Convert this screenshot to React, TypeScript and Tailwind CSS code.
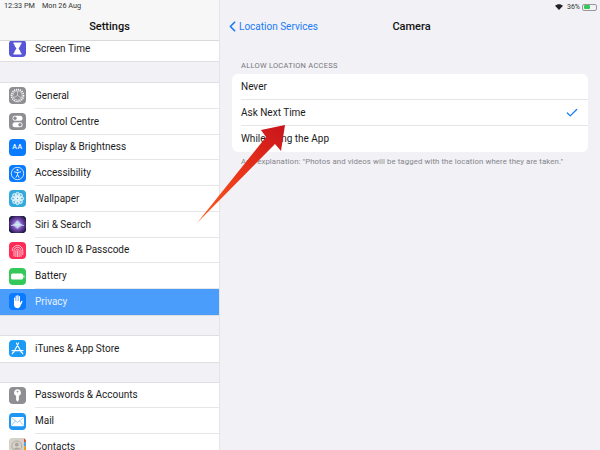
import type { ReactNode } from "react";
import { ChevronLeft, Check } from "lucide-react";

const Tile = ({ bg, children }: { bg: string; children: ReactNode }) => (
  <div className={`w-[17px] h-[17px] rounded-[4px] flex items-center justify-center shrink-0 overflow-hidden ${bg}`}>
    {children}
  </div>
);

const Gear = () => (
  <svg viewBox="0 0 17 17" className="w-[17px] h-[17px]">
    <circle cx="8.5" cy="8.5" r="6" fill="none" stroke="#fff" strokeWidth="1.6" strokeDasharray="1.2 0.8" />
    <circle cx="8.5" cy="8.5" r="4.6" fill="none" stroke="#eee" strokeWidth="0.7" />
    <path d="M8.5 8.5 L8.5 4 M8.5 8.5 L12.4 10.8 M8.5 8.5 L4.6 10.8" stroke="#eee" strokeWidth="0.6" />
  </svg>
);

const Toggles = () => (
  <svg viewBox="0 0 17 17" className="w-[17px] h-[17px]">
    <rect x="3.5" y="2.8" width="10" height="5" rx="2.5" fill="#fff" />
    <circle cx="6" cy="5.3" r="1.7" fill="#8e8e93" />
    <rect x="3.5" y="9.2" width="10" height="5" rx="2.5" fill="#fff" />
    <circle cx="11" cy="11.7" r="1.7" fill="#8e8e93" />
  </svg>
);

const Person = () => (
  <svg viewBox="0 0 17 17" className="w-[17px] h-[17px]" fill="none" stroke="#fff">
    <circle cx="8.5" cy="8.5" r="6.2" strokeWidth="0.8" />
    <circle cx="8.5" cy="5" r="1" fill="#fff" stroke="none" />
    <path d="M5 6.8 L8.5 7.6 L12 6.8 M8.5 7.6 V9.6 M8.5 9.6 L6.8 12.6 M8.5 9.6 L10.2 12.6" strokeWidth="0.9" />
  </svg>
);

const Flower = () => (
  <svg viewBox="0 0 17 17" className="w-[17px] h-[17px]" fill="none" stroke="#fff" strokeWidth="0.8">
    {[0, 45, 90, 135, 180, 225, 270, 315].map((a) => (
      <ellipse key={a} cx="8.5" cy="4.9" rx="1.9" ry="2.6" transform={`rotate(${a} 8.5 8.5)`} fill="#ffffff55" />
    ))}
  </svg>
);

const Siri = () => (
  <svg viewBox="0 0 17 17" className="w-[17px] h-[17px]">
    <defs>
      <radialGradient id="siriGlow" cx="0.5" cy="0.5" r="0.6">
        <stop offset="0" stopColor="#7fd8e8" />
        <stop offset="0.5" stopColor="#7d4bb8" />
        <stop offset="1" stopColor="#16163a" />
      </radialGradient>
    </defs>
    <rect width="17" height="17" fill="url(#siriGlow)" />
    <path d="M2.5 9 C5 9 6 6.5 8.5 4 C11 6.5 12 9 14.5 9 C12 9.6 10.5 11 8.5 13 C6.5 11 5 9.6 2.5 9Z" fill="#ffffff" fillOpacity="0.55" />
    <path d="M2 9.5 C6 8.5 11 8.5 15 9.5" stroke="#d9f3ff" strokeWidth="0.7" fill="none" />
  </svg>
);

const Finger = () => (
  <svg viewBox="0 0 17 17" className="w-[17px] h-[17px]" fill="none" stroke="#fff" strokeWidth="0.8" strokeOpacity="0.85">
    <path d="M3.2 9 C3.2 1.6 13.8 1.6 13.8 9 V13" />
    <path d="M5 14.5 V8.6 C5 4.2 12 4.2 12 8.6 V14.8" />
    <path d="M6.9 15 V8.8 C6.9 6.6 10.1 6.6 10.1 8.8 V15" />
    <path d="M8.5 8.4 V15" />
  </svg>
);

const BatteryGlyph = () => (
  <svg viewBox="0 0 17 17" className="w-[17px] h-[17px]">
    <rect x="2" y="5.5" width="12" height="6" rx="1.6" fill="#fff" />
    <rect x="14.4" y="7.3" width="1" height="2.4" rx="0.5" fill="#fff" />
  </svg>
);

const HandGlyph = () => (
  <svg viewBox="0 0 17 17" className="w-[17px] h-[17px]">
    <path
      d="M5 5 C5 4.2 6.2 4.2 6.2 5 V8 H6.6 V3.2 C6.6 2.4 7.8 2.4 7.8 3.2 V8 H8.2 V2.6 C8.2 1.8 9.4 1.8 9.4 2.6 V8 H9.8 V3.6 C9.8 2.8 11 2.8 11 3.6 V10 L12.2 8.2 C12.8 7.4 13.9 8 13.4 8.9 L11.2 13.4 C10.6 14.6 9.6 15.2 8.4 15.2 C6.2 15.2 5 13.8 5 11.6 Z"
      fill="#fff"
    />
  </svg>
);

const AppStoreGlyph = () => (
  <svg viewBox="0 0 17 17" className="w-[17px] h-[17px]" fill="none" stroke="#fff" strokeWidth="1.1" strokeLinecap="round">
    <path d="M9.6 3 L4.6 12.4 M7.4 3 L12.4 12.4 M3 10.6 H14 M3.2 13.8 L4 12.6 M13.8 13.8 L13 12.6" />
  </svg>
);

const KeyGlyph = () => (
  <svg viewBox="0 0 17 17" className="w-[17px] h-[17px]">
    <path d="M8.5 2.2 a3.4 3.4 0 0 1 1.4 6.5 V13 L8.5 14.8 L7.1 13 V8.7 A3.4 3.4 0 0 1 8.5 2.2Z" fill="#fff" />
    <circle cx="8.5" cy="4.6" r="0.9" fill="#8e8e93" />
  </svg>
);

const MailGlyph = () => (
  <svg viewBox="0 0 17 17" className="w-[17px] h-[17px]" fill="none">
    <rect x="2" y="4" width="13" height="9.2" rx="1" fill="#fff" />
    <path d="M2.4 4.6 L8.5 9.4 L14.6 4.6 M2.4 12.6 L6.4 7.8 M14.6 12.6 L10.6 7.8" stroke="#5aaef0" strokeWidth="0.6" />
  </svg>
);

const ContactsGlyph = () => (
  <svg viewBox="0 0 17 17" className="w-[17px] h-[17px]">
    <rect width="17" height="17" fill="#d6d2c9" />
    <rect x="15" y="0" width="2" height="4.2" fill="#e0483e" />
    <rect x="15" y="4.2" width="2" height="4.2" fill="#4aa3e8" />
    <rect x="15" y="8.4" width="2" height="4.3" fill="#f09a1a" />
    <rect x="15" y="12.7" width="2" height="4.3" fill="#8e8e93" />
    <circle cx="7.8" cy="8" r="5" fill="none" stroke="#a8a49b" strokeWidth="0.8" />
    <circle cx="7.8" cy="6.6" r="1.9" fill="#a8a49b" />
    <path d="M4.4 11.6 C5.2 9 10.4 9 11.2 11.6 Z" fill="#a8a49b" />
  </svg>
);

const Hourglass = () => (
  <svg viewBox="0 0 17 17" className="w-[17px] h-[17px]" fill="#fff">
    <path d="M4.5 2.5 H12.5 V4 H11.8 C11.8 6.4 9.8 7.4 9.6 8.5 C9.8 9.6 11.8 10.6 11.8 13 H12.5 V14.5 H4.5 V13 H5.2 C5.2 10.6 7.2 9.6 7.4 8.5 C7.2 7.4 5.2 6.4 5.2 4 H4.5Z" />
  </svg>
);

type RowProps = { icon: ReactNode; label: string; last?: boolean; active?: boolean };

const Row = ({ icon, label, last, active }: RowProps) => (
  <div className={`h-[25.75px] flex items-center pl-[9px] gap-[9px] relative ${active ? "bg-[#4b9dfb] text-[#e4f0ff]" : "text-[#1c1c1e]"}`}>
    {icon}
    <span className="text-[10px] leading-none">{label}</span>
    {!last && !active && <div className="absolute left-[35px] right-0 bottom-0 h-px bg-[#e6e6e9]" />}
  </div>
);

const Group = ({ children }: { children: ReactNode }) => (
  <div className="bg-white border-y border-[#dfdfe3]">{children}</div>
);

export default function App() {
  return (
    <div className="w-[600px] h-[450px] overflow-hidden flex bg-[#f1f1f6] relative font-['Roboto','Liberation_Sans',sans-serif] antialiased">
      {/* Settings list */}
      <div className="w-[220px] h-full flex flex-col shrink-0 bg-[#f1f1f6] border-r border-[#e4e4e8] overflow-hidden">
        <div className="h-[41px] shrink-0 bg-[#f7f7f8] border-b border-[#d9d9dc] px-[4px] relative z-10">
          <div className="flex gap-[7px] pt-[2px] text-[7.3px] leading-[8px] text-[#333]">
            <span>12:33 PM</span>
            <span>Mon 26 Aug</span>
          </div>
          <div className="text-center text-[11px] leading-none font-medium text-[#111] mt-[11px]">Settings</div>
        </div>

        <div className="h-[21px] shrink-0 bg-white border-b border-[#dfdfe3]">
          <div className="-mt-[5px]">
            <Row icon={<Tile bg="bg-[#5856d6]"><Hourglass /></Tile>} label="Screen Time" last />
          </div>
        </div>

        <div className="h-[20px] shrink-0" />
        <Group>
          <Row icon={<Tile bg="bg-[#8e8e93]"><Gear /></Tile>} label="General" />
          <Row icon={<Tile bg="bg-[#8e8e93]"><Toggles /></Tile>} label="Control Centre" />
          <Row icon={<Tile bg="bg-[#0a7aff]"><span className="text-white text-[7px] font-medium leading-none tracking-[0.5px]">AA</span></Tile>} label="Display & Brightness" />
          <Row icon={<Tile bg="bg-[#0a7aff]"><Person /></Tile>} label="Accessibility" />
          <Row icon={<Tile bg="bg-[#34aadc]"><Flower /></Tile>} label="Wallpaper" />
          <Row icon={<Tile bg="bg-[#16163a]"><Siri /></Tile>} label="Siri & Search" />
          <Row icon={<Tile bg="bg-[#ff2d55]"><Finger /></Tile>} label="Touch ID & Passcode" />
          <Row icon={<Tile bg="bg-[#34c759]"><BatteryGlyph /></Tile>} label="Battery" />
          <Row icon={<Tile bg="bg-[#0a7aff]"><HandGlyph /></Tile>} label="Privacy" active last />
        </Group>

        <div className="h-[19px] shrink-0" />
        <Group>
          <Row icon={<Tile bg="bg-[#1c9bf6]"><AppStoreGlyph /></Tile>} label="iTunes & App Store" last />
        </Group>

        <div className="h-[19px] shrink-0" />
        <Group>
          <Row icon={<Tile bg="bg-[#8e8e93]"><KeyGlyph /></Tile>} label="Passwords & Accounts" />
          <Row icon={<Tile bg="bg-[#1f96f3]"><MailGlyph /></Tile>} label="Mail" />
          <Row icon={<Tile bg="bg-[#d6d2c9]"><ContactsGlyph /></Tile>} label="Contacts" />
        </Group>
      </div>

      {/* Detail pane */}
      <div className="flex-1 min-w-0 flex flex-col">
        <div className="flex justify-end items-center gap-[2px] pt-[3px] pr-[3px] h-[11px] text-[7px] leading-[8px] text-[#333]">
          <svg viewBox="0 0 12 9" className="w-[8px] h-[6px] mr-[2px]" fill="#222">
            <path d="M6 9 L0 2.8 C3.4 -0.6 8.6 -0.6 12 2.8Z" />
          </svg>
          <span>36%</span>
          <div className="w-[15px] h-[7px] border border-[#999] rounded-[2px] p-[0.5px] flex">
            <div className="w-[6px] bg-[#34c759] rounded-[1px]" />
          </div>
        </div>

        <div className="h-[31px] flex items-center relative">
          <div className="flex items-center text-[#1a7cf5] pl-[4px]">
            <ChevronLeft className="w-[17px] h-[17px] -mr-[2px]" strokeWidth={2.4} />
            <span className="text-[10px] leading-none">Location Services</span>
          </div>
          <span className="absolute left-[3px] right-0 text-center text-[11px] leading-none font-medium text-[#111]">Camera</span>
        </div>

        <div className="pl-[12px] pr-[12px] pt-[19px]">
          <div className="pl-[9px] text-[7.5px] leading-[9px] text-[#77777c] tracking-[0.25px] mb-[4px]">ALLOW LOCATION ACCESS</div>
          <div className="bg-white rounded-[6px] overflow-hidden">
            <div className="h-[26px] flex items-center px-[9px] relative">
              <span className="text-[10px] leading-none text-[#1c1c1e]">Never</span>
              <div className="absolute left-[9px] right-0 bottom-0 h-px bg-[#e6e6e9]" />
            </div>
            <div className="h-[26px] flex items-center justify-between pl-[9px] pr-[9px] relative">
              <span className="text-[10px] leading-none text-[#1c1c1e]">Ask Next Time</span>
              <Check className="w-[14px] h-[14px] text-[#1a7cf5]" strokeWidth={2.2} />
              <div className="absolute left-[9px] right-0 bottom-0 h-px bg-[#e6e6e9]" />
            </div>
            <div className="h-[26px] flex items-center px-[9px]">
              <span className="text-[10px] leading-none text-[#1c1c1e]">While using the App</span>
            </div>
          </div>
          <div className="pl-[9px] pt-[5px] text-[7.8px] leading-[9px] tracking-[0.1px] text-[#85858a] whitespace-nowrap">
            App explanation: "Photos and videos will be tagged with the location where they are taken."
          </div>
        </div>
      </div>

      {/* Red annotation arrow */}
      <svg viewBox="0 0 600 450" className="absolute inset-0 w-[600px] h-[450px] pointer-events-none">
        <defs>
          <linearGradient id="arrowFill" x1="197" y1="223" x2="285" y2="125" gradientUnits="userSpaceOnUse">
            <stop offset="0" stopColor="#ff5f1f" />
            <stop offset="0.5" stopColor="#ea341a" />
            <stop offset="1" stopColor="#c8141c" />
          </linearGradient>
        </defs>
        <path d="M197 223 L266 137 L261 130 L285 125 L281 151 L275 144 Z" fill="url(#arrowFill)" />
      </svg>
    </div>
  );
}
